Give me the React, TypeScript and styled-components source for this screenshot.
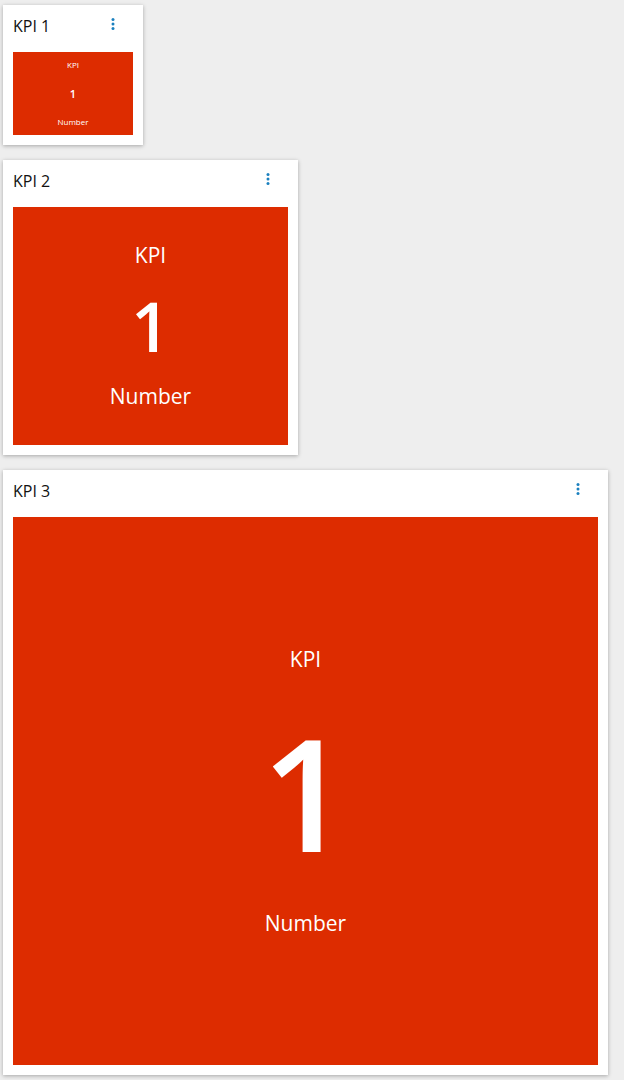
import React from 'react';
import styled, {createGlobalStyle} from "styled-components";

const GlobalStyle = createGlobalStyle`
  html, body {
    margin: 0;
    padding: 0;
    background-color: #eeeeee;
    font-family: "Open Sans", "Noto Sans", sans-serif;
  }
`;

type KpiSize = {
    width: number;
    labelSize: number;
    valueSize: number;
    gap: number;
};

const Board = styled.main`
  display: flex;
  flex-direction: column;
  align-items: flex-start;
  gap: 15px;
  padding: 5px 3px;
`;

const Card = styled.section<{ $width: number }>`
  width: ${props => props.$width}px;
  height: ${props => props.$width}px;
  box-sizing: border-box;
  background-color: white;
  box-shadow: 0 1px 4px rgba(0, 0, 0, 0.3);
  padding: 0 10px 10px;
  display: flex;
  flex-direction: column;
`;

const CardHeader = styled.header`
  height: 47px;
  flex-shrink: 0;
  display: flex;
  align-items: flex-start;
  justify-content: space-between;
  padding-top: 11px;
  box-sizing: border-box;
`;

const Title = styled.h2`
  margin: 0;
  font-size: 16px;
  font-weight: 400;
  line-height: 21px;
  color: #111;
`;

const MenuButton = styled.button`
  width: 41px;
  height: 18px;
  margin-top: -1px;
  padding: 0;
  border: none;
  background: none;
  display: flex;
  justify-content: center;
  cursor: pointer;
  color: #1a80bf;
`;

const KpiBox = styled.div<{ $gap: number }>`
  flex: 1;
  background-color: #dd2c00;
  color: white;
  display: flex;
  flex-direction: column;
  align-items: center;
  justify-content: center;
  gap: ${props => props.$gap}px;
`;

const KpiText = styled.span<{ $size: number; $strong?: boolean }>`
  font-size: ${props => props.$size}px;
  line-height: 1;
  font-weight: ${props => props.$strong ? 600 : 400};
`;

const MoreIcon = () => (
    <svg width="18" height="18" viewBox="0 0 24 24" fill="currentColor">
        <circle cx="12" cy="6" r="2"/>
        <circle cx="12" cy="12" r="2"/>
        <circle cx="12" cy="18" r="2"/>
    </svg>
);

const kpis: (KpiSize & { title: string })[] = [
    {title: "KPI 1", width: 140, labelSize: 8, valueSize: 11, gap: 19},
    {title: "KPI 2", width: 295, labelSize: 21, valueSize: 68, gap: 26},
    {title: "KPI 3", width: 605, labelSize: 21, valueSize: 155, gap: 44},
];

function App() {
    return (
        <>
            <GlobalStyle/>
            <Board>
                {kpis.map(kpi => (
                    <Card key={kpi.title} $width={kpi.width}>
                        <CardHeader>
                            <Title>{kpi.title}</Title>
                            <MenuButton aria-label="menu"><MoreIcon/></MenuButton>
                        </CardHeader>
                        <KpiBox $gap={kpi.gap}>
                            <KpiText $size={kpi.labelSize}>KPI</KpiText>
                            <KpiText $size={kpi.valueSize} $strong>1</KpiText>
                            <KpiText $size={kpi.labelSize}>Number</KpiText>
                        </KpiBox>
                    </Card>
                ))}
            </Board>
        </>
    );
}

export default App;
